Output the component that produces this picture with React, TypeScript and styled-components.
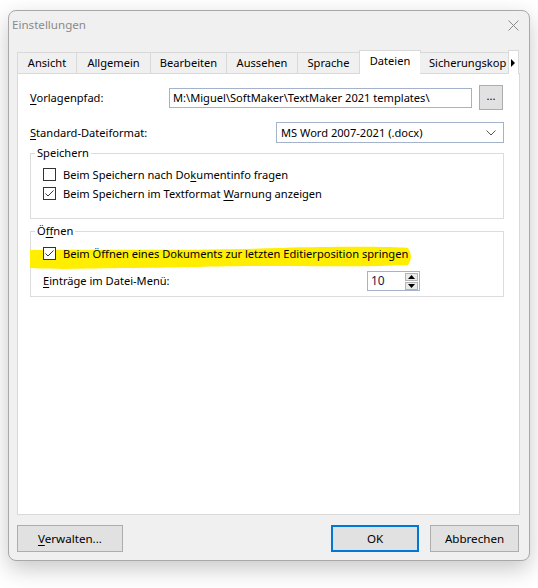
import React from "react";
import styled, { createGlobalStyle } from "styled-components";

const Global = createGlobalStyle`
  html, body { margin: 0; padding: 0; background: #ffffff; }
  body { font-family: "Noto Sans", "Segoe UI", sans-serif; font-size: 11.1px; line-height: 16px; color: #000; }
  * { box-sizing: border-box; }
`;

const Stage = styled.div`
  width: 538px;
  height: 588px;
  padding: 10px 8px 0 8px;
`;

const Window = styled.div`
  width: 522px;
  height: 551px;
  background: #f0f0f0;
  border: 1px solid #a8a8a8;
  border-radius: 8px;
  box-shadow: 0 8px 22px rgba(0, 0, 0, 0.22);
  display: flex;
  flex-direction: column;
`;

const TitleBar = styled.div`
  height: 28px;
  display: flex;
  align-items: center;
  justify-content: space-between;
  padding: 0 10px 0 3px;
  color: #8a8a8a;
  font-size: 11.6px;
`;

const Body = styled.div`
  flex: 1;
  display: flex;
  flex-direction: column;
  padding: 11px 10px 8px 8px;
`;

const TabRow = styled.div`
  display: flex;
  align-items: flex-end;
  height: 24px;
  position: relative;
  z-index: 1;
  margin-bottom: -1px;
`;

const Tab = styled.div<{ $w: number; $active?: boolean }>`
  width: ${(p) => p.$w}px;
  height: ${(p) => (p.$active ? 24 : 22)}px;
  padding-top: ${(p) => (p.$active ? 2 : 0)}px;
  margin-left: ${(p) => (p.$active ? "-1px" : "0")};
  margin-right: ${(p) => (p.$active ? "-1px" : "0")};
  background: ${(p) => (p.$active ? "#ffffff" : "#f0f0f0")};
  border: 1px solid #d9d9d9;
  border-left-width: ${(p) => (p.$active ? 1 : 0)}px;
  border-bottom: ${(p) => (p.$active ? "none" : "1px solid #d9d9d9")};
  display: flex;
  align-items: ${(p) => (p.$active ? "flex-start" : "center")};
  justify-content: center;
  white-space: nowrap;
  overflow: hidden;
  &:first-child { border-left-width: 1px; }
`;

const ClipTab = styled(Tab)`
  justify-content: flex-start;
  padding-left: 9px;
`;

const TabArrow = styled.div`
  width: 11px;
  height: 24px;
  background: #ffffff;
  border: 1px solid #d9d9d9;
  border-bottom: none;
  display: flex;
  align-items: center;
  justify-content: center;
  margin-left: -1px;
`;

const Panel = styled.div`
  width: 503px;
  height: 442px;
  background: #ffffff;
  border: 1px solid #d9d9d9;
  padding: 11px 15px 0 12px;
  display: flex;
  flex-direction: column;
`;

const Row = styled.div<{ $mt?: number }>`
  display: flex;
  align-items: center;
  height: 25px;
  margin-top: ${(p) => p.$mt ?? 0}px;
`;

const Label = styled.div<{ $w?: number }>`
  width: ${(p) => (p.$w ? `${p.$w}px` : "auto")};
  flex: ${(p) => (p.$w ? "none" : "1")};
  white-space: nowrap;
`;

const U = styled.span`
  text-decoration: underline;
  text-underline-offset: 2px;
`;

const TextInput = styled.div`
  width: 303px;
  height: 20px;
  border: 1px solid #a4b3c9;
  padding: 0 3px;
  display: flex;
  align-items: center;
  white-space: nowrap;
  overflow: hidden;
`;

const SmallButton = styled.div`
  width: 24px;
  height: 25px;
  margin-left: 7px;
  background: #e1e1e1;
  border: 1px solid #adadad;
  display: flex;
  align-items: center;
  justify-content: center;
  padding-bottom: 3px;
`;

const Select = styled.div`
  width: 228px;
  height: 21px;
  border: 1px solid #a4b3c9;
  padding: 0 7px 0 4px;
  display: flex;
  align-items: center;
  justify-content: space-between;
  margin-left: auto;
`;

const Group = styled.fieldset<{ $mt: number; $h: number }>`
  margin: ${(p) => p.$mt}px 0 0 0;
  height: ${(p) => p.$h}px;
  border: 1px solid #dcdcdc;
  padding: 0 12px 0 12px;
  position: relative;
  display: flex;
  flex-direction: column;
`;

const Legend = styled.legend`
  padding: 0 2px;
  margin-left: -8px;
  line-height: 14px;
`;

const CheckRow = styled.label<{ $mt?: number }>`
  position: relative;
  display: flex;
  align-items: center;
  gap: 7px;
  height: 19px;
  flex: none;
  margin-top: ${(p) => p.$mt ?? 0}px;
  white-space: nowrap;
  z-index: 1;
`;

const Box = styled.span`
  width: 13px;
  height: 13px;
  border: 1px solid #333333;
  background: #ffffff;
  display: inline-flex;
  flex: none;
`;

const Highlight = styled.svg`
  position: absolute;
  left: -1px;
  top: 8px;
  z-index: 0;
`;

const SpinRow = styled.div`
  display: flex;
  align-items: center;
  height: 22px;
  flex: none;
  margin-top: 7px;
`;

const Spin = styled.div`
  margin-left: auto;
  margin-right: 71px;
  width: 53px;
  height: 20px;
  border: 1px solid #a4b3c9;
  display: flex;
  align-items: center;
  justify-content: space-between;
  padding: 0 1px 0 3px;
  color: #1b1b4b;
  font-size: 12px;
`;

const SpinButtons = styled.div`
  display: flex;
  flex-direction: column;
  gap: 1px;
`;

const SpinBtn = styled.div`
  width: 13px;
  height: 8px;
  background: #eaeaea;
  border: 1px solid #b5b5b5;
  display: flex;
  align-items: center;
  justify-content: center;
`;

const Footer = styled.div`
  display: flex;
  align-items: center;
  gap: 11px;
  margin-top: 10px;
  height: 27px;
`;

const Spacer = styled.div`
  flex: 1;
`;

const Button = styled.div<{ $w: number; $primary?: boolean }>`
  width: ${(p) => p.$w}px;
  height: 27px;
  background: #e1e1e1;
  border: ${(p) => (p.$primary ? "2px solid #0078d7" : "1px solid #adadad")};
  display: flex;
  align-items: center;
  justify-content: center;
  font-size: 11.6px;
`;

const Check = ({ checked }: { checked?: boolean }) => (
  <Box>
    {checked && (
      <svg width="11" height="11" viewBox="0 0 11 11">
        <polyline points="1.5,5.5 4,8 9.5,2.5" fill="none" stroke="#333" strokeWidth="1" />
      </svg>
    )}
  </Box>
);

const tabs = [
  { label: "Ansicht", w: 60 },
  { label: "Allgemein", w: 74 },
  { label: "Bearbeiten", w: 76 },
  { label: "Aussehen", w: 71 },
  { label: "Sprache", w: 62 },
];

export default function App() {
  return (
    <>
      <Global />
      <Stage>
        <Window>
          <TitleBar>
            <span>Einstellungen</span>
            <svg width="11" height="11" viewBox="0 0 11 11">
              <path d="M0.5,0.5 L10.5,10.5 M10.5,0.5 L0.5,10.5" stroke="#8a8a8a" strokeWidth="1" />
            </svg>
          </TitleBar>
          <Body>
            <TabRow>
              {tabs.map((t) => (
                <Tab key={t.label} $w={t.w}>
                  {t.label}
                </Tab>
              ))}
              <Tab $w={62} $active>
                Dateien
              </Tab>
              <ClipTab $w={89}>Sicherungskop</ClipTab>
              <TabArrow>
                <svg width="5" height="8" viewBox="0 0 5 8">
                  <path d="M0,0 L4,4 L0,8 Z" fill="#000" />
                </svg>
              </TabArrow>
            </TabRow>
            <Panel>
              <Row>
                <Label $w={139}>
                  <U>V</U>orlagenpfad:
                </Label>
                <TextInput>M:\Miguel\SoftMaker\TextMaker 2021 templates\</TextInput>
                <SmallButton>...</SmallButton>
              </Row>
              <Row $mt={10}>
                <Label>
                  <U>S</U>tandard-Dateiformat:
                </Label>
                <Select>
                  <span>MS Word 2007-2021 (.docx)</span>
                  <svg width="10" height="6" viewBox="0 0 10 6">
                    <polyline points="0.5,0.5 5,5 9.5,0.5" fill="none" stroke="#555" strokeWidth="1" />
                  </svg>
                </Select>
              </Row>
              <Group $mt={1} $h={73}>
                <Legend>Speichern</Legend>
                <CheckRow $mt={5}>
                  <Check />
                  <span>
                    Beim Speichern nach Do<U>k</U>umentinfo fragen
                  </span>
                </CheckRow>
                <CheckRow>
                  <Check checked />
                  <span>
                    Beim Speichern im Textformat <U>W</U>arnung anzeigen
                  </span>
                </CheckRow>
              </Group>
              <Group $mt={5} $h={73}>
                <Legend>
                  Ö<U>f</U>fnen
                </Legend>
                <Highlight width="384" height="26" viewBox="0 0 384 26">
                  <path
                    d="M0,4 C60,3 150,5 250,2 C320,0 368,1 378,2 Q384,11 378,19 C340,21 300,20 250,20 C180,20 150,22 100,22 C60,22 40,24 0,22 Z"
                    fill="#ffee00"
                  />
                </Highlight>
                <CheckRow $mt={6}>
                  <Check checked />
                  <span>Beim Öffnen eines Dokuments zur letzten Editierposition springen</span>
                </CheckRow>
                <SpinRow>
                  <span>
                    <U>E</U>inträge im Datei-Menü:
                  </span>
                  <Spin>
                    <span>10</span>
                    <SpinButtons>
                      <SpinBtn>
                        <svg width="7" height="4" viewBox="0 0 7 4">
                          <path d="M0,4 L3.5,0 L7,4 Z" fill="#000" />
                        </svg>
                      </SpinBtn>
                      <SpinBtn>
                        <svg width="7" height="4" viewBox="0 0 7 4">
                          <path d="M0,0 L3.5,4 L7,0 Z" fill="#000" />
                        </svg>
                      </SpinBtn>
                    </SpinButtons>
                  </Spin>
                </SpinRow>
              </Group>
            </Panel>
            <Footer>
              <Button $w={106}>
                <span>
                  <U>V</U>erwalten...
                </span>
              </Button>
              <Spacer />
              <Button $w={88} $primary>
                OK
              </Button>
              <Button $w={89}>Abbrechen</Button>
            </Footer>
          </Body>
        </Window>
      </Stage>
    </>
  );
}
